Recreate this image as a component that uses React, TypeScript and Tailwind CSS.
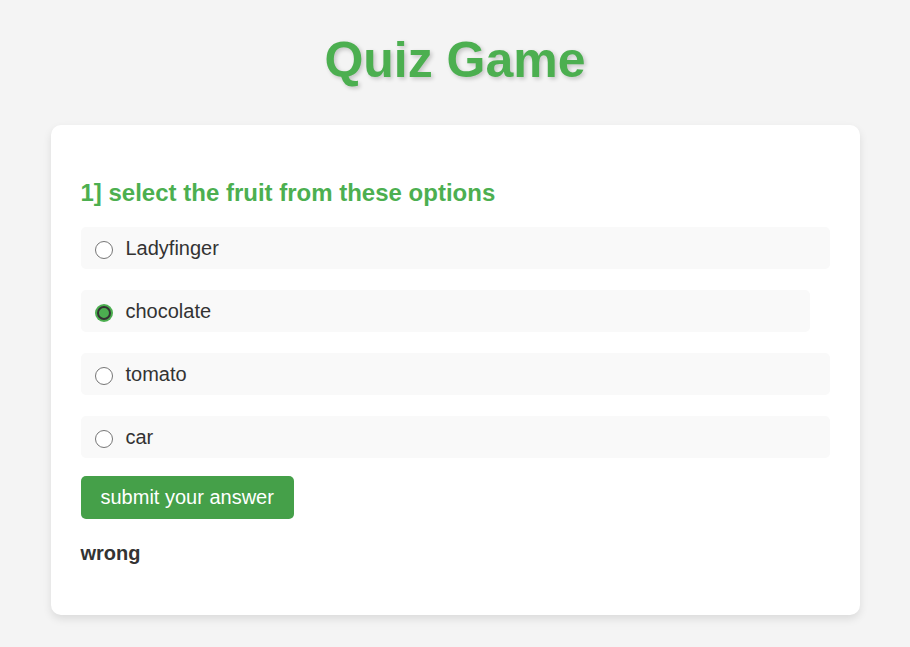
import { useState } from 'react'

const options = ['Ladyfinger', 'chocolate', 'tomato', 'car']

export default function App() {
  const [selected, setSelected] = useState('chocolate')
  const [result] = useState('wrong')

  return (
    <div className="min-h-screen bg-[#f4f4f4] pt-[33px] pb-[33px] font-['Liberation_Sans',Arial,sans-serif]">
      <h1 className="text-center text-[50px] leading-[55px] font-bold text-[#4caf50] [text-shadow:2px_2px_4px_rgba(0,0,0,0.2)]">
        Quiz Game
      </h1>

      {/* Quiz card */}
      <div className="mx-auto mt-[37px] w-[809px] rounded-[10px] bg-white px-[30px] pt-[54px] pb-[50px] shadow-[0_4px_8px_rgba(0,0,0,0.1)]">
        <h2 className="text-[24px] leading-[28px] font-bold text-[#4caf50]">
          1] select the fruit from these options
        </h2>

        <div className="mt-[20px] flex flex-col gap-[21px]">
          {options.map((opt) => {
            const checked = selected === opt
            return (
              <label
                key={opt}
                onClick={() => setSelected(opt)}
                className={
                  'flex h-[42px] cursor-pointer items-center gap-[13px] rounded-[5px] bg-[#f9f9f9] px-[14px] text-[20px] leading-[23px] text-[#333] ' +
                  (checked ? 'w-[729px]' : 'w-full')
                }
              >
                {checked ? (
                  <span className="mt-[3px] flex h-[18px] w-[18px] shrink-0 items-center justify-center rounded-full bg-[#4caf50]">
                    <span className="h-[14px] w-[14px] rounded-full border-2 border-[#333] bg-[#4caf50]" />
                  </span>
                ) : (
                  <span className="mt-[3px] h-[18px] w-[18px] shrink-0 rounded-full border-[1.5px] border-[#767676] bg-white" />
                )}
                <span>{opt}</span>
              </label>
            )
          })}
        </div>

        <button className="mt-[18px] rounded-[5px] bg-[#45a049] px-[20px] py-[10px] text-[20px] leading-[23px] text-white">
          submit your answer
        </button>

        <p className="mt-[23px] text-[20px] leading-[23px] font-bold text-[#333]">{result}</p>
      </div>
    </div>
  )
}
